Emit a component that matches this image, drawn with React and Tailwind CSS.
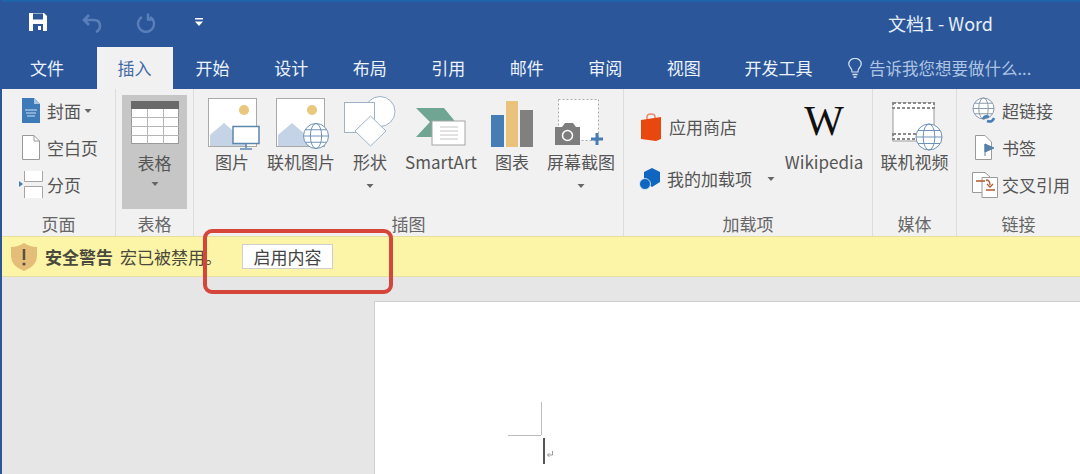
const font = { fontFamily: '"Noto Sans CJK SC", "Noto Sans", sans-serif' };

function Caret({ className = "" }) {
  return (
    <svg width="8" height="6" viewBox="0 0 8 6" className={className}>
      <path d="M0.5 1 H7.5 L4 5 Z" fill="#666" />
    </svg>
  );
}

function Globe({ x, y, r, stroke = "#6f93b8" }) {
  return (
    <g fill="#fff" stroke={stroke} strokeWidth="1">
      <circle cx={x} cy={y} r={r} />
      <ellipse cx={x} cy={y} rx={r * 0.45} ry={r} fill="none" />
      <path d={`M${x - r} ${y}H${x + r}M${x - r * 0.85} ${y - r * 0.5}H${x + r * 0.85}M${x - r * 0.85} ${y + r * 0.5}H${x + r * 0.85}`} fill="none" />
    </g>
  );
}

function PictureBase() {
  return (
    <>
      <rect x="0.5" y="0.5" width="48" height="48" fill="#fff" stroke="#a9a9a9" />
      <circle cx="36" cy="12" r="5" fill="#e9c77c" />
      <path d="M2 48 V37 L16 25 L30 37 L38 33 V48 Z" fill="#c5d3e6" />
    </>
  );
}

function IconPicture() {
  return (
    <svg width="54" height="52" viewBox="0 0 54 52" className="-mb-[3px] ml-[6px]">
      <PictureBase />
      <rect x="25" y="28.5" width="26" height="17" fill="#fff" stroke="#5e86ad" strokeWidth="1.5" />
      <path d="M38 46v4M32 51h12" stroke="#5e86ad" strokeWidth="1.5" />
    </svg>
  );
}

function IconOnlinePicture() {
  return (
    <svg width="54" height="52" viewBox="0 0 54 52" className="-mb-[3px] ml-[4px]">
      <PictureBase />
      <Globe x={40} y={38} r={12.5} />
    </svg>
  );
}

function IconShapes() {
  return (
    <svg width="52" height="52" viewBox="0 0 52 52" className="-mb-[1px]">
      <circle cx="36" cy="15.5" r="15" fill="#fff" stroke="#9fb2c6" />
      <rect x="0.5" y="6.5" width="30" height="30" fill="#fff" stroke="#9fb2c6" />
      <path d="M26.5 20 L42 35 L26.5 50 L11 35 Z" fill="#fff" stroke="#9fb2c6" />
    </svg>
  );
}

function IconSmartArt() {
  return (
    <svg width="50" height="40" viewBox="0 0 50 40">
      <path d="M0 1 H28 L42 18 L28 30 H0 L14 15 Z" fill="#6fa592" />
      <rect x="16" y="14" width="33" height="24" fill="#fff" stroke="#a5a5a5" />
      <path d="M24 20h18M24 24h18M24 28h18M24 32h18" stroke="#c4c4c4" />
    </svg>
  );
}

function IconChart() {
  return (
    <svg width="42" height="46" viewBox="0 0 42 46">
      <rect x="0" y="14" width="13" height="32" fill="#467db5" />
      <rect x="15" y="0" width="12" height="46" fill="#e9c27c" />
      <rect x="29" y="9" width="13" height="37" fill="#808080" />
    </svg>
  );
}

function IconScreenshot() {
  return (
    <svg width="52" height="48" viewBox="0 0 52 48">
      <rect x="3.5" y="0.5" width="40" height="41" fill="#fff" stroke="#aaa" strokeDasharray="2 2" />
      <path d="M0 28 H7 L10 24 H18 L21 28 H25 V46 H0 Z" fill="#7d7d7d" />
      <circle cx="12.5" cy="36.5" r="5" fill="#7d7d7d" stroke="#fff" strokeWidth="1.5" />
      <path d="M36 40h12M42 34v12" stroke="#467db5" strokeWidth="3" />
    </svg>
  );
}

function IconTable() {
  return (
    <svg width="48" height="43" viewBox="0 0 48 43">
      <rect x="0.5" y="0.5" width="47" height="42" fill="#fff" stroke="#9a9a9a" />
      <rect x="0" y="0" width="48" height="8" fill="#6a6a6a" />
      <path d="M0 16.5h48M0 25.5h48M0 34.5h48M16.5 8v35M32.5 8v35" stroke="#b5b5b5" />
    </svg>
  );
}

function IconCover() {
  return (
    <svg width="18" height="25" viewBox="0 0 18 25">
      <path d="M0 0 H12 L18 6 V25 H0 Z" fill="#3f7ab8" />
      <path d="M12 0 V6 H18 Z" fill="#a9c6e2" />
      <path d="M3 12h12M4 15h10M5 18h8" stroke="#cfe0f0" />
    </svg>
  );
}

function IconBlank() {
  return (
    <svg width="18" height="25" viewBox="0 0 18 25">
      <path d="M0.5 0.5 H12 L17.5 6 V24.5 H0.5 Z" fill="#fff" stroke="#9a9a9a" />
      <path d="M12 0.5 V6 H17.5" fill="none" stroke="#9a9a9a" />
    </svg>
  );
}

function IconBreak() {
  return (
    <svg width="24" height="27" viewBox="0 0 24 27">
      <path d="M5.5 0 V10.5 H23.5 V0" fill="#fff" stroke="#a5a5a5" />
      <path d="M5.5 27 V15.5 H23.5 V27" fill="#fff" stroke="#a5a5a5" />
      <path d="M0 10 L4 13 L0 16 Z" fill="#467db5" />
    </svg>
  );
}

function IconStore() {
  return (
    <svg width="22" height="28" viewBox="0 0 22 28">
      <path d="M7 8 V4 Q7 1 11 1 Q15 1 15 4 V8" fill="none" stroke="#e98a6a" strokeWidth="1.5" />
      <path d="M1 7 L21 4 V26 L16 28 L1 26 Z" fill="#e8470f" />
    </svg>
  );
}

function IconAddins() {
  return (
    <svg width="23" height="23" viewBox="0 0 23 23">
      <path d="M13 1 L21 5 V15 L13 20 L5 15 V5 Z" fill="#0f66c0" />
      <circle cx="6" cy="17" r="5.5" fill="#0f66c0" stroke="#f1f1f1" strokeWidth="0.8" />
    </svg>
  );
}

function IconVideo() {
  return (
    <svg width="52" height="50" viewBox="0 0 52 50" className="-mb-[5px] ml-[6px]">
      <rect x="1" y="1" width="41" height="38" fill="#fff" stroke="#9a9a9a" />
      <rect x="1" y="1" width="41" height="5" fill="#fff" stroke="#8a8a8a" strokeDasharray="3 2" strokeWidth="2" />
      <rect x="1" y="32" width="41" height="5" fill="#fff" stroke="#8a8a8a" strokeDasharray="3 2" strokeWidth="2" />
      <Globe x={37} y={35} r={13} />
    </svg>
  );
}

function IconLink() {
  return (
    <svg width="25" height="28" viewBox="0 0 25 28">
      <Globe x={11.5} y={11.5} r={10.5} stroke="#8a9bad" />
      <path d="M11 22 Q13 18 17 20 M15 24 Q20 26 22 21" fill="none" stroke="#467db5" strokeWidth="2.5" />
    </svg>
  );
}

function IconBookmark() {
  return (
    <svg width="20" height="25" viewBox="0 0 20 25">
      <path d="M0.5 0.5 H10 L16.5 7 V24.5 H0.5 Z" fill="#fff" stroke="#9a9a9a" />
      <path d="M10 9 V21 M10 9 L19 13 L10 17 Z" fill="#5580a8" stroke="#5580a8" />
    </svg>
  );
}

function IconCrossRef() {
  return (
    <svg width="26" height="26" viewBox="0 0 26 26">
      <path d="M0.5 0.5 H13 L18 5 V20.5 H0.5 Z" fill="#fff" stroke="#9a9a9a" />
      <path d="M10 5.5 H25.5 V25.5 H10 Z" fill="#fff" stroke="#9a9a9a" />
      <path d="M4 9h9M14 8q4 0 4 5M15 12l3 3 3-3M14 18h9" fill="none" stroke="#b4562e" strokeWidth="1.3" />
    </svg>
  );
}

function IconShield() {
  return (
    <svg width="26" height="28" viewBox="0 0 26 28">
      <path d="M13 0 Q19 4 26 4 V13 Q26 23 13 28 Q0 23 0 13 V4 Q7 4 13 0 Z" fill="#e4bd78" />
      <path d="M13 6 V17" stroke="#5a5040" strokeWidth="2.5" />
      <circle cx="13" cy="21" r="1.6" fill="#5a5040" />
    </svg>
  );
}

function BigButton({ width, label, icon, caret }) {
  return (
    <div className="flex flex-col items-center" style={{ width }}>
      <div className="flex items-end justify-center h-[58px]">{icon}</div>
      <div className="h-[25px] mt-[2px] text-[17px] leading-[25px] whitespace-nowrap text-[#555]">{label}</div>
      {caret ? <Caret className="mt-[9px]" /> : null}
    </div>
  );
}

function SmallRow({ icon, label, caret, iconBox = "w-[27px]", gap = "ml-[3px]" }) {
  return (
    <div className="flex items-center h-[37px]">
      <div className={`flex justify-center shrink-0 ${iconBox}`}>{icon}</div>
      <span className={`${gap} text-[17px] whitespace-nowrap text-[#555]`}>{label}</span>
      {caret ? <Caret className="ml-[3px]" /> : null}
    </div>
  );
}

function Group({ width, label, children, last }) {
  return (
    <div className={`flex flex-col h-full ${last ? "" : "border-r border-[#dcdcdc]"}`} style={{ width }}>
      <div className="flex-1 min-h-0">{children}</div>
      <div className="h-[24px] text-center text-[17px] leading-[24px] text-[#666]">{label}</div>
    </div>
  );
}

const tabs = [
  ["开始", "w-[79px]"],
  ["设计", "w-[78.5px]"],
  ["布局", "w-[78.5px]"],
  ["引用", "w-[78.5px]"],
  ["邮件", "w-[78.5px]"],
  ["审阅", "w-[78.5px]"],
  ["视图", "w-[78.5px]"],
  ["开发工具", "w-[111px]"],
];

export default function App() {
  return (
    <div className="relative w-[1080px] h-[474px] overflow-hidden flex flex-col bg-[#e6e6e6] border-l-2 border-[#2b579a]" style={font}>
      {/* Title bar */}
      <div className="h-[47px] shrink-0 bg-[#2b579a] border-t-2 border-[#1f64ab] flex items-center -ml-[2px] pl-[2px]">
        <svg width="20" height="20" viewBox="0 0 20 20" className="ml-[26px] -mt-[5px]">
          <path d="M1 1 H16 L19 4 V19 H1 Z" fill="#fff" />
          <rect x="5" y="1.5" width="10" height="6" fill="#2b579a" />
          <rect x="5" y="12" width="10" height="7" fill="#2b579a" />
          <rect x="10" y="14" width="3" height="4" fill="#fff" />
        </svg>
        <svg width="20" height="20" viewBox="0 0 20 20" className="ml-[34px] -mt-[3px]">
          <path d="M7 2 L2 7 L7 12 M2 7 H12 Q18 7 18 13 Q18 17 14 19" fill="none" stroke="#5a7fb8" strokeWidth="2.6" />
        </svg>
        <svg width="20" height="20" viewBox="0 0 20 20" className="ml-[34px] -mt-[3px]">
          <path d="M6 4 A8 8 0 1 0 14 4 M12 0.5 L12 6.5 L18 6.5" fill="none" stroke="#5a7fb8" strokeWidth="2.4" />
        </svg>
        <svg width="8" height="9" viewBox="0 0 8 9" className="ml-[39px] -mt-[5px]">
          <path d="M0 0h8v1.5H0zM0 3.5h8L4 8z" fill="#fff" />
        </svg>
        <div className="ml-auto mr-[87px] -mt-[2px] text-[18px] text-[#e8eef7] whitespace-nowrap">文档1 - Word</div>
      </div>

      {/* Tabs */}
      <div className="h-[42px] shrink-0 bg-[#2b579a] flex items-stretch text-[17px] text-[#eef3fa] -ml-[2px] pl-[8px]">
        <div className="w-[78px] flex items-center justify-center">文件</div>
        <div className="ml-[11px] w-[76px] pr-[1px] bg-[#f1f1f1] text-[#3f6aa5] flex items-center justify-center">插入</div>
        {tabs.map(([t, w]) => (
          <div key={t} className={`${w} flex items-center justify-center`}>{t}</div>
        ))}
        <div className="ml-[14px] flex items-center text-[#afc4e2] text-[16.5px] whitespace-nowrap">
          <svg width="14" height="20" viewBox="0 0 14 20" className="mr-[7px]">
            <path d="M4 14 Q4 11 2 9 Q0.8 7.5 0.8 6 A6.2 5.6 0 0 1 13.2 6 Q13.2 7.5 12 9 Q10 11 10 14 Z" fill="none" stroke="#d6e2f2" strokeWidth="1.2" />
            <path d="M4.5 16.5h5M5.5 19h3" stroke="#d6e2f2" strokeWidth="1.4" />
          </svg>
          告诉我您想要做什么...
        </div>
      </div>

      {/* Ribbon */}
      <div className="h-[147px] shrink-0 bg-[#f1f1f1] flex">
        <Group width={114} label="页面">
          <div className="pl-[15px] pt-[3px]">
            <SmallRow icon={<IconCover />} label="封面" caret />
            <SmallRow icon={<IconBlank />} label="空白页" />
            <SmallRow icon={<IconBreak />} label="分页" />
          </div>
        </Group>
        <Group width={78} label="表格">
          <div className="pl-[6px] pt-[6px]">
            <div className="w-[65px] h-[114px] bg-[#c6c6c6] flex flex-col items-center pt-[6px]">
              <IconTable />
              <div className="mt-[6px] text-[17px] leading-[25px] text-[#555]">表格</div>
              <Caret className="mt-[6px]" />
            </div>
          </div>
        </Group>
        <Group width={430} label="插图">
          <div className="flex pl-[3px]">
            <BigButton width={70} label="图片" icon={<IconPicture />} />
            <BigButton width={68} label="联机图片" icon={<IconOnlinePicture />} />
            <BigButton width={70} label="形状" icon={<IconShapes />} caret />
            <BigButton width={72} label="SmartArt" icon={<IconSmartArt />} />
            <BigButton width={70} label="图表" icon={<IconChart />} />
            <BigButton width={68} label="屏幕截图" icon={<IconScreenshot />} caret />
          </div>
        </Group>
        <Group width={249} label="加载项">
          <div className="flex">
            <div className="w-[161px] pl-[15px] pt-[19px] flex flex-col gap-[15px]">
              <SmallRow icon={<IconStore />} label="应用商店" iconBox="w-[24px]" gap="ml-[6px]" />
              <div className="flex items-center h-[37px]">
                <IconAddins />
                <span className="ml-[5px] text-[17px] whitespace-nowrap text-[#555]">我的加载项</span>
                <Caret className="ml-[15px]" />
              </div>
            </div>
            <div className="w-[78px] flex flex-col items-center">
              <div className="h-[58px] pb-[6px] flex items-end justify-center text-[42px] leading-[40px] text-[#111]" style={{ fontFamily: '"Liberation Serif", serif' }}>W</div>
              <div className="h-[25px] mt-[2px] text-[17px] leading-[25px] text-[#555]">Wikipedia</div>
            </div>
          </div>
        </Group>
        <Group width={84} label="媒体">
          <div className="flex justify-center">
            <BigButton width={68} label="联机视频" icon={<IconVideo />} />
          </div>
        </Group>
        <Group width={123} last label="链接">
          <div className="pl-[14px] pt-[3px]">
            <SmallRow icon={<IconLink />} label="超链接" gap="ml-[4px]" />
            <SmallRow icon={<IconBookmark />} label="书签" gap="ml-[4px]" />
            <SmallRow icon={<IconCrossRef />} label="交叉引用" gap="ml-[4px]" />
          </div>
        </Group>
      </div>

      {/* Message bar */}
      <div className="h-[41px] shrink-0 bg-[#fcf4a7] border-y border-[#e6dfa0] flex items-center pl-[9px]">
        <IconShield />
        <span className="ml-[8px] text-[17px] font-bold text-[#4a4a3c]">安全警告</span>
        <span className="ml-[7px] text-[17px] text-[#4a4a3c] w-[122px] whitespace-nowrap">宏已被禁用。</span>
        <button className="w-[91px] h-[25px] bg-white border border-[#cfcfcf] text-[17px] leading-[23px] text-[#444]">启用内容</button>
      </div>

      {/* Document area */}
      <div className="flex-1 min-h-0 pl-[372px] pt-[24px]">
        <div className="relative w-full h-full bg-white border-l border-t border-[#cfcfcf]">
          <div className="absolute left-[133px] top-[133px] w-[33px] h-px bg-[#bdbdbd]" />
          <div className="absolute left-[166px] top-[100px] w-px h-[33px] bg-[#bdbdbd]" />
          <div className="absolute left-[168px] top-[136px] w-[2px] h-[26px] bg-[#555]" />
          <svg width="8" height="8" viewBox="0 0 8 8" className="absolute left-[171px] top-[148px]">
            <path d="M6.5 1 V5 H1.5 M3.5 3 L1.5 5 L3.5 7" fill="none" stroke="#999" strokeWidth="1" />
          </svg>
        </div>
      </div>

      {/* Red annotation */}
      <div className="absolute left-[201px] top-[229px] w-[190px] h-[65px] border-[4px] border-[#d6453a] rounded-[9px]" />
    </div>
  );
}
